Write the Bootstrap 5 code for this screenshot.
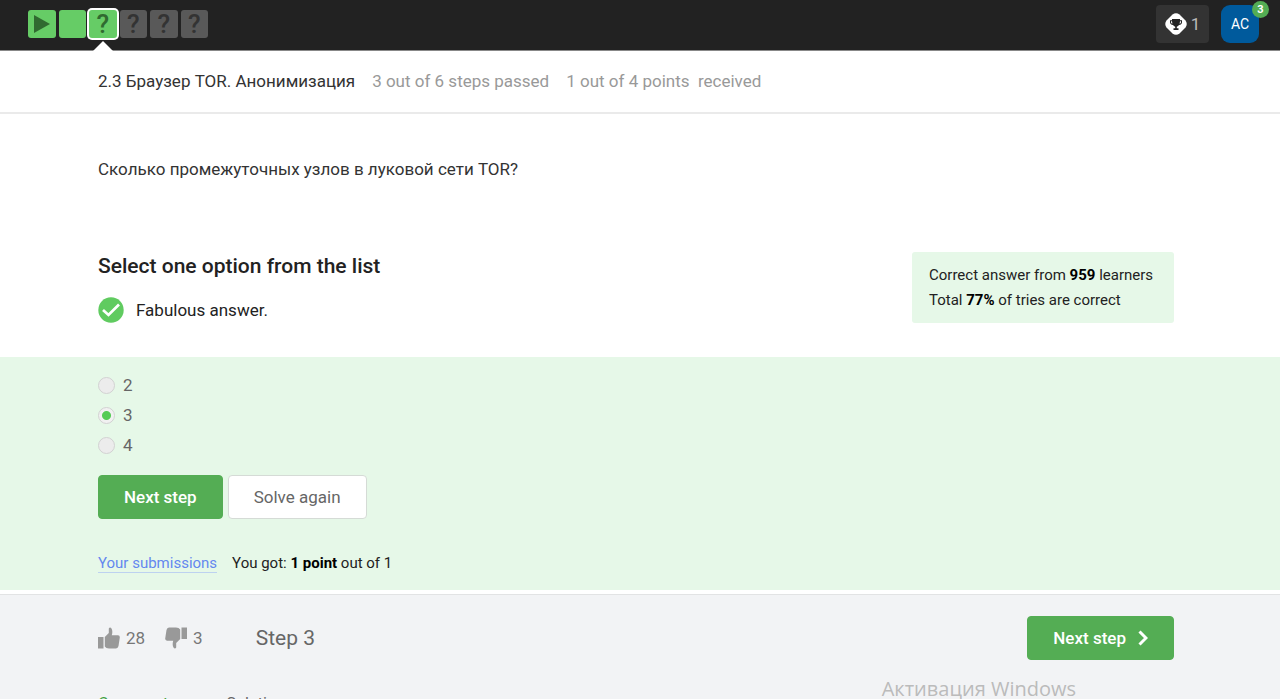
<!DOCTYPE html>
<html lang="en">
<head>
<meta charset="utf-8">
<meta name="viewport" content="width=device-width, initial-scale=1">
<title>2.3 Браузер TOR. Анонимизация</title>
<link href="https://cdn.jsdelivr.net/npm/bootstrap@5.3.0/dist/css/bootstrap.min.css" rel="stylesheet">
<style>
  body { font-family: Roboto, "Open Sans", sans-serif; font-size: 17px; line-height: 24px; color: #333; background: #fff; }
  .page-x { padding-left: 98px; padding-right: 106px; }
  .topbar { background: #222; height: 51px; padding-left: 28px; padding-right: 21px; border-bottom: 1px solid #888; }
  .steps { gap: 3px; padding-top: 10px; width: 180px; }
  .step-box { display: grid; place-items: center; flex: 1 1 0; height: 28px; border-radius: 3px; background: #595959; color: #333; font-size: 26px; line-height: 28px; font-weight: 500; text-decoration: none; position: relative; }
  .step-done { background: #66cc66; color: #306a30; }
  .step-now { box-shadow: 0 0 0 2px #fff; }
  .step-now::after { content: ""; position: absolute; top: 31px; left: 4px; border: 10px solid transparent; border-top: 0; border-bottom-color: #fff; }
  .trophies { background: #333; color: #bbb; width: 53px; height: 38px; border-radius: 4px; gap: 4px; margin-top: 5px; }
  .avatar { background: #005a9c; color: #fff; width: 38px; height: 38px; border-radius: 9px; font-size: 14px; margin-top: 5px; }
  .notice { position: absolute; top: -4px; right: -10px; width: 17px; height: 17px; border-radius: 50%; background: #54ad54; font-size: 11px; line-height: 17px; font-weight: 700; }
  .lesson-bar { height: 63px; padding-bottom: 2px; border-bottom: 2px solid #eaeaea; column-gap: 17px; }
  .faint { color: #999; }
  .question { padding-top: 43px; padding-bottom: 71px; }
  .task-head { padding-bottom: 34px; }
  .task-title { font-size: 21px; line-height: 28px; font-weight: 500; color: #222; margin-bottom: 17px; }
  .verdict { gap: 12px; color: #222; }
  .stats { background: #e6f8e8; border-radius: 3px; font-size: 15px; line-height: 25px; padding: 11px 17px 10px; min-width: 262px; color: #222; }
  strong { font-weight: 700; color: #000; }
  .answer { background: #e6f8e8; padding-top: 16px; padding-bottom: 15px; color: #666; }
  .choice { gap: 8px; height: 24px; margin-bottom: 6px; }
  .choice .form-check-input { width: 17px; height: 17px; margin: 0; background-color: #ececec; border: 1px solid #d2d2d2; }
  .choice .form-check-input:checked { background-color: #f1f1f1; background-image: radial-gradient(circle, #5c5 0 4px, transparent 5px); }
  .btn-step { font-size: 17px; line-height: 24px; padding: 9px 25px; border-radius: 4px; }
  .btn-go { background: #54ad54; border-color: #54ad54; color: #fff; font-weight: 500; }
  .btn-redo { background: #fff; border-color: #d5dbd6; color: #666; }
  .actions { gap: 5px; margin-top: 18px; }
  .result { margin-top: 32px; gap: 15px; font-size: 15px; color: #222; }
  .result a { color: #6488ef; text-decoration: none; line-height: 18px; border-bottom: 1px solid #bdd2f0; }
  .step-footer { margin-top: 4px; border-top: 1px solid #e2e3e4; background: #f2f3f5; padding-top: 21px; }
  .vote { background: none; border: 0; padding: 0; color: #777; gap: 6px; }
  .step-name { font-size: 21px; color: #666; margin-left: 53px; }
  .next-link { gap: 12px; }
  .tabs { gap: 50px; margin-top: 32px; font-size: 16px; }
  .tabs a { color: #666; text-decoration: none; }
  .tabs a.current { color: #3fa13f; }
  .watermark { position: absolute; right: 204px; bottom: -4px; font: 20px/28px "Open Sans", sans-serif; color: #bbb; pointer-events: none; }
</style>
</head>
<body class="vh-100 overflow-hidden position-relative d-flex flex-column">
<header class="topbar d-flex justify-content-between align-items-start flex-shrink-0">
  <nav class="steps d-flex" aria-label="Steps">
    <a class="step-box step-done" href="#" aria-label="Video"><svg width="18" height="20" viewBox="0 0 18 20"><path d="M1 1L17 10L1 19Z" fill="#306a30"/></svg></a>
    <a class="step-box step-done" href="#" aria-label="Text"></a>
    <a class="step-box step-done step-now" href="#">?</a>
    <a class="step-box" href="#">?</a>
    <a class="step-box" href="#">?</a>
    <a class="step-box" href="#">?</a>
  </nav>
  <div class="d-flex gap-2">
    <div class="trophies d-flex align-items-center justify-content-center me-1">
      <svg width="22" height="22" viewBox="0 0 22 22"><path d="M7.500 1.500Q11-1 14.500 1.500L20.500 7.500Q23 11 20.500 14.500L14.500 20.500Q11 23 7.500 20.500L1.500 14.500Q-1 11 1.500 7.500Z" fill="#fff"/><path d="M7 6h8v1.200h2v2q0 2.200-3 2.800-.8 1.300-2.200 1.700v1.500h1.700V17h-5v-1.800h1.700v-1.500Q8.800 13.300 8 12 5 11.400 5 9.200v-2h2zM6 8.200v1q0 1 1.400 1.500L7 8.200zm10 0h-1l-.4 2.500Q16 10.200 16 9.200z" fill="#222"/></svg>
      <span>1</span>
    </div>
    <button class="avatar border-0 p-0 position-relative">AC<span class="notice">3</span></button>
  </div>
</header>

<section class="lesson-bar page-x d-flex align-items-center flex-shrink-0">
  <span>2.3 Браузер TOR. Анонимизация</span>
  <span class="faint">3 out of 6 steps passed</span>
  <span class="faint">1 out of 4 points&nbsp; received</span>
</section>

<main class="flex-shrink-0">
  <p class="question page-x mb-0">Сколько промежуточных узлов в луковой сети TOR?</p>
  <section class="task-head page-x d-flex justify-content-between align-items-start">
    <div>
      <h2 class="task-title">Select one option from the list</h2>
      <div class="verdict d-flex align-items-center">
        <svg width="26" height="26" viewBox="0 0 26 26"><circle cx="13" cy="13" r="12.700" fill="#60cb60"/><path d="M5 13L10.500 18L21 7.500" fill="none" stroke="#fff" stroke-width="2.700"/></svg>
        <span>Fabulous answer.</span>
      </div>
    </div>
    <div class="stats">Correct answer from <strong>959</strong> learners<br>Total <strong>77%</strong> of tries are correct</div>
  </section>
  <form class="answer page-x">
    <div class="choice d-flex align-items-center"><input class="form-check-input" type="radio" name="nodes" id="n2"><label for="n2">2</label></div>
    <div class="choice d-flex align-items-center"><input class="form-check-input" type="radio" name="nodes" id="n3" checked><label for="n3">3</label></div>
    <div class="choice d-flex align-items-center"><input class="form-check-input" type="radio" name="nodes" id="n4"><label for="n4">4</label></div>
    <div class="actions d-flex">
      <button type="button" class="btn btn-step btn-go">Next step</button>
      <button type="button" class="btn btn-step btn-redo">Solve again</button>
    </div>
    <div class="result d-flex align-items-center">
      <a href="#">Your submissions</a>
      <span>You got: <strong>1 point</strong> out of 1</span>
    </div>
  </form>
</main>

<footer class="step-footer page-x flex-grow-1 flex-shrink-0">
  <div class="d-flex align-items-center">
    <button class="vote d-flex align-items-center me-3"><svg width="22" height="22" viewBox="0 0 22 22"><path d="M0 10h5.500v11.500H0zM6.800 10L10.800 6V1.500Q12-.5 13.500 1.500Q15 4 13.800 8.300H20Q22 8.500 21.800 10.500L20.500 19Q20 21.300 18 21.500H11Q8 21.500 6.800 19.500Z" fill="#999"/></svg>28</button>
    <button class="vote d-flex align-items-center ms-1"><svg width="22" height="22" viewBox="0 0 22 22"><path d="M22 12h-5.500V.5H22zM15.200 12L11.200 16V20.500Q10 22.500 8.500 20.500Q7 18 8.200 13.700H2Q0 13.500.2 11.500L1.500 3Q2 .7 4 .5H11Q14 .5 15.200 2.500Z" fill="#999"/></svg>3</button>
    <span class="step-name">Step 3</span>
    <button class="btn btn-step btn-go next-link ms-auto d-flex align-items-center">Next step<svg width="10" height="16" viewBox="0 0 10 16"><path d="M1.500 1.500L8 8L1.500 14.500" fill="none" stroke="#fff" stroke-width="3"/></svg></button>
  </div>
  <nav class="tabs d-flex">
    <a class="current" href="#">Comments</a>
    <a href="#">Solutions</a>
  </nav>
</footer>
<div class="watermark">Активация Windows</div>
<script src="https://cdn.jsdelivr.net/npm/bootstrap@5.3.0/dist/js/bootstrap.bundle.min.js"></script>
</body>
</html>
